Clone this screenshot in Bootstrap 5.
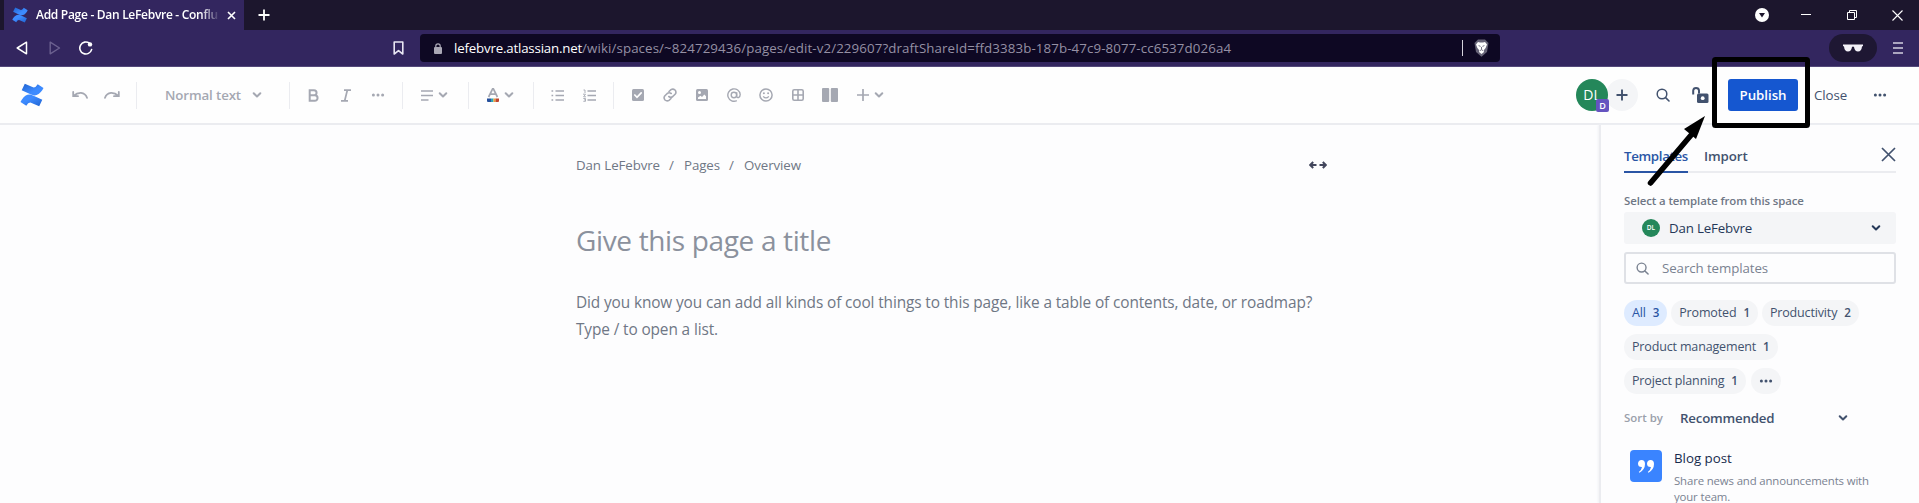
<!DOCTYPE html>
<html lang="en">
<head>
<meta charset="utf-8">
<title>Add Page - Dan LeFebvre - Confluence</title>
<link href="https://cdn.jsdelivr.net/npm/bootstrap@5.3.0/dist/css/bootstrap.min.css" rel="stylesheet">
<style>
body{font-family:"Open Sans","Noto Sans",sans-serif;font-size:13.3px;line-height:20px;letter-spacing:-.09px;color:#42526e;background:#fdfdfe;height:503px;overflow:hidden}
svg{display:block;flex:none}
/* browser chrome */
.tabstrip{height:30px;background:#1c162d;padding-left:4px}
.browser-tab{width:240px;height:30px;background:#33265f;color:#fff;font-size:12px;padding-left:8px}
.tab-title{width:184px;overflow:hidden;font-weight:600;letter-spacing:-.29px;-webkit-mask-image:linear-gradient(90deg,#000 165px,transparent 184px)}
.tab-close{margin-left:7px}
.tab-new{margin-left:14px}
.winctl{padding-right:16px}
.winctl .w-min{margin-left:32px}
.winctl .w-max{margin-left:36px}
.winctl .w-close{margin-left:35px}
.addressbar{height:37px;background:#33265f;border-bottom:1px solid #54497a;padding-top:4px}
.navbtns{width:420px;height:28px;padding-left:16px}
.navbtns .n-fwd{margin-left:21px}
.navbtns .n-reload{margin-left:18px}
.navbtns .n-mark{margin-left:300px}
.urlbox{width:1080px;height:28px;background:#0e0823;border-radius:4px;color:#9590a4;letter-spacing:.105px}
.urlbox b{color:#fff;font-weight:400;letter-spacing:-.19px}
.urlbox .u-lock{margin:0 12px 0 14px}
.urlbox .u-end{padding-right:11px}
.urlbox .u-line{width:1px;height:16px;background:#d5d3dc;margin-right:11px}
.menuside{height:28px;padding-right:16px}
.shades{width:48px;height:28px;border-radius:14px;background:#1e1733;margin-right:16px}
/* editor toolbar */
.editorbar{height:58px;background:#fefefe;border-bottom:2px solid #ebecf0;color:#a5a8b2}
.cell{width:32px;height:32px;display:flex;align-items:center;justify-content:center;flex:none}
.c33{width:33px}
.c49{width:49px}
.c50{width:50px}
.c64{width:64px}
.drop{justify-content:flex-start;padding-left:11px;gap:5px}
.vsep{width:16px;height:27px;flex:none;background:linear-gradient(#ebecf0,#ebecf0) center/1px 100% no-repeat}
.textstyle{width:137px;padding-left:21px}
.textstyle span{width:87px;letter-spacing:-.12px}
.actions{color:#42526e;padding-right:32px}
.avatar{width:32px;height:32px;border-radius:50%;background:#24875a;color:#fff;position:relative}
.actions .avatar{font-size:14px}
.avatar i{position:absolute;right:-1px;bottom:-1px;width:13px;height:13px;background:#6554c0;border-radius:2px;font:600 9px/13px "Open Sans",sans-serif;text-align:center}
.addperson{background:#f4f5f7;margin:0 18px 0 -2px}
.a-lock{margin:0 19px 0 22px}
.publish{width:70px;height:32px;background:#1557d0;color:#fff;border-radius:3px;font-weight:600;letter-spacing:-.03px}
.closebtn{margin-left:16px;width:59px}
/* editing area */
.work{height:378px}
.canvas{width:1599px;padding:30px 0 0 576px;color:#6f7785}
.crumb1{width:93px}
.crumb2{width:45px}
.crumb3{width:565px}
.slash{width:15px}
.title-ph{font-size:28px;line-height:40px;margin-top:45px;color:#8b919d;letter-spacing:-.35px}
.body-ph{font-size:15.4px;line-height:27px;margin-top:29px;letter-spacing:-.12px}
/* template panel */
.side{width:320px;background:#fdfdfe;border-left:2px solid #ebecf0;padding:21px 23px 0 23px;box-shadow:-1px 0 2px #f0f1f4}
.tabs{height:27px;border-bottom:2px solid #ebecf0;font-weight:600}
.tabs .on{width:64px;color:#2a55a5;border-bottom:2px solid #2a55a5;height:27px;letter-spacing:-.33px;margin-right:16px}
.panel-x{margin-top:1px}
.fieldname{font-size:11.4px;margin-top:18px;color:#6f7785}
.spacebox{height:32px;background:#f4f5f7;border-radius:3px;color:#253858;margin-top:1px;padding:0 15px 0 18px;letter-spacing:-.17px}
.spacebox .avatar{width:18px;height:18px;font-size:6.5px;margin-right:9px;letter-spacing:0}
.searchbox{height:32px;border:2px solid #dfe1e6;border-radius:3px;color:#7a8291;margin-top:8px;padding-left:10px;gap:13px}
.chips1{margin-top:16px;gap:4px}
.chips2{margin-top:8px;gap:5px}
.chip{height:26px;border-radius:13px;background:#f4f5f7;padding:0 8px;line-height:26px;font-size:12.5px;letter-spacing:-.15px}
.chip.on{background:#deebff;color:#2a55a5}
.chip u{text-decoration:none;font-weight:600;font-size:11.6px;margin-left:7px}
.sortrow{margin-top:14px}
.sortrow .s-name{width:56px;font-size:11.4px;color:#9aa0ab;letter-spacing:.03px}
.sortrow .s-val{width:158px;letter-spacing:-.2px}
.tpl{margin:20px 0 0 6px;gap:12px}
.quoteicon{width:32px;height:32px;background:#3a84ff;border-radius:4px;margin-top:2px}
.tpl-name{color:#172b4d;letter-spacing:0}
.tpl-text{font-size:11.4px;line-height:16px;margin-top:5px;color:#7a8291;letter-spacing:-.14px}
.markup{left:1640px;top:50px}
</style>
</head>
<body>
<svg width="0" height="0" class="position-absolute">
<defs>
<linearGradient id="g1" x1="1" y1="1" x2="0" y2="0"><stop offset="0" stop-color="#1f62cf"/><stop offset=".6" stop-color="#3d8bff"/></linearGradient>
<linearGradient id="g2" x1="0" y1="0" x2="1" y2="1"><stop offset="0" stop-color="#1f62cf"/><stop offset=".6" stop-color="#3d8bff"/></linearGradient>
<symbol id="conf" viewBox="0 0 24 24"><path d="M1.600 16.900Q6.500 9.600 13 12.400L22.300 16.700L19.200 23.300L11.600 19.900Q8.600 18.700 6.300 22.700L.5 19.100Z" fill="url(#g1)"/><path d="M22.400 7.100Q17.500 14.400 11 11.600L1.700 7.300L4.800.7L12.400 4.100Q15.400 5.300 17.700 1.300L23.500 4.900Z" fill="url(#g2)"/></symbol>
<symbol id="chev" viewBox="0 0 10 8"><path d="M1.700 2.200L5 5.500L8.300 2.200" fill="none" stroke="currentColor" stroke-width="2" stroke-linecap="round" stroke-linejoin="round"/></symbol>
<symbol id="dots" viewBox="0 0 14 4"><g fill="currentColor"><circle cx="2.400" cy="2" r="1.500"/><circle cx="7" cy="2" r="1.500"/><circle cx="11.600" cy="2" r="1.500"/></g></symbol>
<symbol id="find" viewBox="0 0 14 14"><circle cx="6" cy="6" r="4.800" fill="none" stroke="currentColor" stroke-width="1.500"/><path d="M9.600 9.600L13 13" stroke="currentColor" stroke-width="1.600" stroke-linecap="round"/></symbol>
</defs>
</svg>

<header>
<div class="tabstrip d-flex">
  <div class="browser-tab d-flex align-items-center">
    <svg width="16" height="16"><use href="#conf"/></svg>
    <div class="tab-title text-nowrap ms-2">Add Page - Dan LeFebvre - Conflu</div>
    <svg class="tab-close" width="9" height="9" viewBox="0 0 9 9"><path d="M1 1L8 8M8 1L1 8" stroke="#fff" stroke-width="1.600"/></svg>
  </div>
  <svg width="12" height="12" class="tab-new align-self-center" viewBox="0 0 12 12"><path d="M6 .5V11.500M.5 6H11.500" stroke="#fff" stroke-width="1.800"/></svg>
  <div class="winctl ms-auto d-flex align-items-center">
    <svg width="14" height="14" viewBox="0 0 14 14"><circle cx="7" cy="7" r="7" fill="#fff"/><path d="M4 5H10L7 9.500Z" fill="#1c162d"/></svg>
    <svg class="w-min" width="10" height="10" viewBox="0 0 10 10"><path d="M0 4.500H10" stroke="#fff"/></svg>
    <svg class="w-max" width="10" height="10" viewBox="0 0 10 10"><path d="M.5 2.500H7.500V9.500H.5ZM2.500 2.500V.5H9.500V7.500H7.500" fill="none" stroke="#fff"/></svg>
    <svg class="w-close" width="11" height="11" viewBox="0 0 11 11"><path d="M.5.5L10.500 10.500M10.500.5L.5 10.500" stroke="#fff" stroke-width="1.100"/></svg>
  </div>
</div>
<div class="addressbar d-flex">
  <div class="navbtns d-flex align-items-center">
    <svg width="12" height="14" viewBox="0 0 12 14"><path d="M10.500 1.200V12.800L1.200 7Z" fill="none" stroke="#fff" stroke-width="1.500" stroke-linejoin="round"/></svg>
    <svg class="n-fwd" width="12" height="14" viewBox="0 0 12 14"><path d="M1.200 1.200V12.800L10.500 7Z" fill="none" stroke="#6c6190" stroke-width="1.400" stroke-linejoin="round"/></svg>
    <svg class="n-reload" width="14" height="14" viewBox="0 0 14 14"><path d="M12.600 8.600A6 6 0 1 1 10.400 2.200" fill="none" stroke="#fff" stroke-width="1.600" stroke-linecap="round"/><circle cx="11" cy="3.400" r="2.200" fill="#fff"/></svg>
    <svg class="n-mark" width="11" height="14" viewBox="0 0 11 14"><path d="M1.200 1H9.800V13L5.500 9.600L1.200 13Z" fill="none" stroke="#e8e5f2" stroke-width="1.600" stroke-linejoin="round"/></svg>
  </div>
  <div class="urlbox d-flex align-items-center">
    <svg class="u-lock" width="8" height="11" viewBox="0 0 8 11"><path d="M1.800 5V3A2.200 2.200 0 0 1 6.200 3V5" fill="none" stroke="#aaa7b5" stroke-width="1.200"/><rect y="4" width="8" height="7" rx="1" fill="#aaa7b5"/></svg>
    <div class="text-nowrap"><b>lefebvre.atlassian.net</b>/wiki/spaces/~824729436/pages/edit-v2/229607?draftShareId=ffd3383b-187b-47c9-8077-cc6537d026a4</div>
    <div class="u-end ms-auto d-flex align-items-center">
      <div class="u-line"></div>
      <svg width="15" height="18" viewBox="0 0 15 18"><path d="M4 .5H11L14.500 4L13 13L7.500 17.700L2 13L.5 4Z" fill="#666377"/><path d="M4 3L6 3.600H9L11 3L13 5.500L11.600 9L9.600 11.500L10 13L7.500 15L5 13L5.400 11.500L3.400 9L2 5.500Z" fill="#fff"/><path d="M4.600 6.600L6.600 7.400M10.400 6.600L8.400 7.400M7.500 8V10.500M6 11.600L7.500 10.700L9 11.600" stroke="#666377" stroke-width=".9" fill="none"/></svg>
    </div>
  </div>
  <div class="menuside ms-auto d-flex align-items-center">
    <div class="shades d-flex align-items-center justify-content-center"><svg width="20" height="8" viewBox="0 0 20 8"><path d="M0 .5H20V2L19 2.500Q18.500 7.500 15 7.500Q11.800 7.500 11 3Q10 2.200 9 3Q8.200 7.500 5 7.500Q1.500 7.500 1 2.500L0 2Z" fill="#f3f1f8"/></svg></div>
    <svg width="10" height="12" viewBox="0 0 10 12"><path d="M0 1H10M0 6H10M0 11H10" stroke="#d4d0e0" stroke-width="1.600"/></svg>
  </div>
</div>

<div class="editorbar d-flex align-items-center">
  <div class="cell c64"><svg width="24" height="24"><use href="#conf"/></svg></div>
  <div class="cell"><svg width="16" height="10" viewBox="0 0 16 10"><path d="M1.200 2V6.200H6M1.500 6Q5 2.600 9 2.800Q13.500 3.200 15 7.800" fill="none" stroke="currentColor" stroke-width="1.800" stroke-linecap="round"/></svg></div>
  <div class="cell"><svg width="16" height="10" viewBox="0 0 16 10"><path d="M14.800 2V6.200H10M14.500 6Q11 2.600 7 2.800Q2.500 3.200 1 7.800" fill="none" stroke="currentColor" stroke-width="1.800" stroke-linecap="round"/></svg></div>
  <div class="vsep"></div>
  <div class="textstyle d-flex align-items-center fw-semibold text-nowrap"><span>Normal text</span><svg width="10" height="8"><use href="#chev"/></svg></div>
  <div class="vsep"></div>
  <div class="cell"><svg width="12" height="13" viewBox="0 0 12 13"><path d="M2.700 1.200H7A2.500 2.500 0 0 1 7 6.300H2.700ZM2.700 6.300H7.800A2.700 2.700 0 0 1 7.800 11.800H2.700Z" fill="none" stroke="currentColor" stroke-width="2"/></svg></div>
  <div class="cell c33"><svg width="10" height="13" viewBox="0 0 10 13"><path d="M3 1.200H10M0 11.800H7M6.300 1.200L3.700 11.800" fill="none" stroke="currentColor" stroke-width="1.700"/></svg></div>
  <div class="cell"><svg width="14" height="4"><use href="#dots"/></svg></div>
  <div class="vsep"></div>
  <div class="cell drop c50"><svg width="12" height="11" viewBox="0 0 12 11"><path d="M0 1H12M0 5.500H12M0 10H7.500" stroke="currentColor" stroke-width="1.700"/></svg><svg width="10" height="8"><use href="#chev"/></svg></div>
  <div class="vsep"></div>
  <div class="cell drop c49"><svg width="12" height="14" viewBox="0 0 12 14"><path d="M1.600 9L5.600.9H6.400L10.400 9M3.200 6.200H8.800" fill="none" stroke="currentColor" stroke-width="1.700"/><path d="M0 10.500H4V14H1Q0 14 0 13Z" fill="#26509c"/><path d="M4 10.500H6.500V14H4Z" fill="#2fa6b8"/><path d="M6.500 10.500H8.500V14H6.500Z" fill="#efa03a"/><path d="M8.500 10.500H12V13Q12 14 11 14H8.500Z" fill="#c0452f"/></svg><svg width="10" height="8"><use href="#chev"/></svg></div>
  <div class="vsep"></div>
  <div class="cell"><svg width="13" height="11" viewBox="0 0 13 11"><path d="M.5 1H2.200M4.500 1H13M.5 5.500H2.200M4.500 5.500H13M.5 10H2.200M4.500 10H13" stroke="currentColor" stroke-width="1.700"/></svg></div>
  <div class="cell"><svg width="13" height="13" viewBox="0 0 13 13"><path d="M4.500 2H13M4.500 6.500H13M4.500 11H13" stroke="currentColor" stroke-width="1.700"/><path d="M.5 1H2V4M0 5.200H2.500L.6 7.800H3M.3 9.500H2.500V12.300H.3M1 10.900H2.500" stroke="currentColor" stroke-width=".9" fill="none"/></svg></div>
  <div class="vsep"></div>
  <div class="cell c33"><svg width="12" height="12" viewBox="0 0 12 12"><rect width="12" height="12" rx="1.500" fill="currentColor"/><path d="M2.800 6L5 8.300L9.200 3.800" fill="none" stroke="#fff" stroke-width="1.700" stroke-linecap="round"/></svg></div>
  <div class="cell"><svg width="14" height="14" viewBox="0 0 14 14"><g fill="none" stroke="currentColor" stroke-width="1.600" stroke-linecap="round"><path d="M6 3.500L8 1.700Q10 .3 12 2Q13.700 4 12.300 6L9.800 8.500Q7.800 10 5.800 8.500"/><path d="M8 10.500L6 12.300Q4 13.700 2 12Q.3 10 1.700 8L4.200 5.500Q6.200 4 8.200 5.500"/></g></svg></div>
  <div class="cell"><svg width="12" height="12" viewBox="0 0 12 12"><rect width="12" height="12" rx="1.500" fill="currentColor"/><circle cx="3.500" cy="3.500" r="1.500" fill="#fff"/><path d="M2 10V8.500L4.500 6.800L6 8L8.300 5.500L10 7.200V10Z" fill="#fff"/></svg></div>
  <div class="cell"><svg width="14" height="14" viewBox="0 0 14 14"><g fill="none" stroke="currentColor" stroke-width="1.400"><circle cx="6.900" cy="7" r="2.700"/><path d="M9.700 4.200V8.500Q10 9.900 11.500 9.600Q13.200 8.700 13.200 6.500A6.200 6.200 0 1 0 9.800 12.600"/></g></svg></div>
  <div class="cell"><svg width="14" height="14" viewBox="0 0 14 14"><circle cx="7" cy="7" r="6.100" fill="none" stroke="currentColor" stroke-width="1.500"/><path d="M4.200 8.300Q7 11.600 9.800 8.300" fill="none" stroke="currentColor" stroke-width="1.300"/><circle cx="4.900" cy="5.300" r="1" fill="currentColor"/><circle cx="9.100" cy="5.300" r="1" fill="currentColor"/></svg></div>
  <div class="cell"><svg width="12" height="12" viewBox="0 0 12 12"><rect x=".8" y=".8" width="10.400" height="10.400" rx="1.400" fill="none" stroke="currentColor" stroke-width="1.600"/><path d="M6 1V11M1 6H11" stroke="currentColor" stroke-width="1.600"/></svg></div>
  <div class="cell"><svg width="16" height="14" viewBox="0 0 16 14"><rect width="7.200" height="14" rx="1" fill="currentColor"/><rect x="8.800" width="7.200" height="14" rx="1" fill="currentColor"/></svg></div>
  <div class="cell drop c49"><svg width="12" height="12" viewBox="0 0 12 12"><path d="M6 .5V11.500M.5 6H11.500" stroke="currentColor" stroke-width="1.700" stroke-linecap="round"/></svg><svg width="10" height="8"><use href="#chev"/></svg></div>

  <div class="actions ms-auto d-flex align-items-center text-nowrap">
    <div class="avatar d-flex align-items-center justify-content-center">DL<i>D</i></div>
    <div class="addperson cell rounded-circle"><svg width="12" height="12" viewBox="0 0 12 12"><path d="M6 .5V11.500M.5 6H11.500" stroke="currentColor" stroke-width="1.900"/></svg></div>
    <svg width="14" height="14"><use href="#find"/></svg>
    <svg class="a-lock" width="17" height="17" viewBox="0 0 17 17"><path d="M1.200 7.500V3.500Q1.500 1 4 1Q6.800 1 7 3.500V6.500" fill="none" stroke="currentColor" stroke-width="2"/><path d="M6 6.500H15Q16.500 6.500 16.500 8V14.500Q16.500 16 15 16H6.500Q5 16 5 14.500V7.500Z" fill="currentColor"/><circle cx="10.700" cy="11.200" r="1.900" fill="#fff"/></svg>
    <div class="publish d-flex align-items-center justify-content-center">Publish</div>
    <span class="closebtn">Close</span>
    <svg width="14" height="4"><use href="#dots"/></svg>
  </div>
</div>
</header>

<div class="work d-flex">
<main class="canvas">
  <div class="d-flex text-nowrap"><span class="crumb1">Dan LeFebvre</span><span class="slash">/</span><span class="crumb2">Pages</span><span class="slash">/</span><span class="crumb3">Overview</span>
    <svg width="18" height="8" class="align-self-center" viewBox="0 0 18 8"><path d="M7.500 4H1.500M4.200 1L1.200 4L4.200 7M10.500 4H16.500M13.800 1L16.800 4L13.800 7" fill="none" stroke="#42465c" stroke-width="2"/></svg></div>
  <div class="title-ph text-nowrap">Give this page a title</div>
  <div class="body-ph text-nowrap">Did you know you can add all kinds of cool things to this page, like a table of contents, date, or roadmap?<br>Type / to open a list.</div>
</main>
<aside class="side text-nowrap">
  <div class="tabs d-flex"><span class="on">Templates</span><span>Import</span><svg class="panel-x ms-auto" width="15" height="15" viewBox="0 0 15 15"><path d="M1 1L14 14M14 1L1 14" stroke="#42526e" stroke-width="1.700"/></svg></div>
  <div class="fieldname fw-semibold">Select a template from this space</div>
  <div class="spacebox d-flex align-items-center"><span class="avatar d-flex align-items-center justify-content-center fw-semibold">DL</span><span>Dan LeFebvre</span><svg class="ms-auto" width="10" height="8"><use href="#chev"/></svg></div>
  <div class="searchbox d-flex align-items-center"><svg width="13" height="13"><use href="#find"/></svg><span>Search templates</span></div>
  <div class="chips1 d-flex"><span class="chip on">All<u>3</u></span><span class="chip">Promoted<u>1</u></span><span class="chip">Productivity<u>2</u></span></div>
  <div class="chips2 d-flex"><span class="chip">Product management<u>1</u></span></div>
  <div class="chips2 d-flex"><span class="chip">Project planning<u>1</u></span><span class="chip d-flex align-items-center"><svg width="14" height="4"><use href="#dots"/></svg></span></div>
  <div class="sortrow d-flex align-items-center fw-semibold"><span class="s-name">Sort by</span><span class="s-val">Recommended</span><svg width="10" height="8"><use href="#chev"/></svg></div>
  <div class="tpl d-flex"><div class="quoteicon d-flex align-items-center justify-content-center"><svg width="16" height="13" viewBox="0 0 16 13"><path id="q" d="M3.500 0Q7 0 7 4Q7 9.500 1.500 12.800L.8 12Q3.800 9.500 4 7Q0 7.200 0 3.500Q.3 0 3.500 0Z" fill="#fff"/><use href="#q" x="9"/></svg></div>
    <div><div class="tpl-name">Blog post</div><div class="tpl-text">Share news and announcements with<br>your team.</div></div></div>
</aside>
</div>

<svg class="markup position-absolute" width="180" height="145" viewBox="1640 50 180 145"><rect x="1714.500" y="59.500" width="93" height="66" rx="1" fill="none" stroke="#000" stroke-width="5"/><path d="M1650.500 183L1692 134" stroke="#000" stroke-width="5.500" stroke-linecap="round"/><path d="M1705 116L1684 129L1696 139Z" fill="#000"/></svg>
<script src="https://cdn.jsdelivr.net/npm/bootstrap@5.3.0/dist/js/bootstrap.bundle.min.js"></script>
</body>
</html>
